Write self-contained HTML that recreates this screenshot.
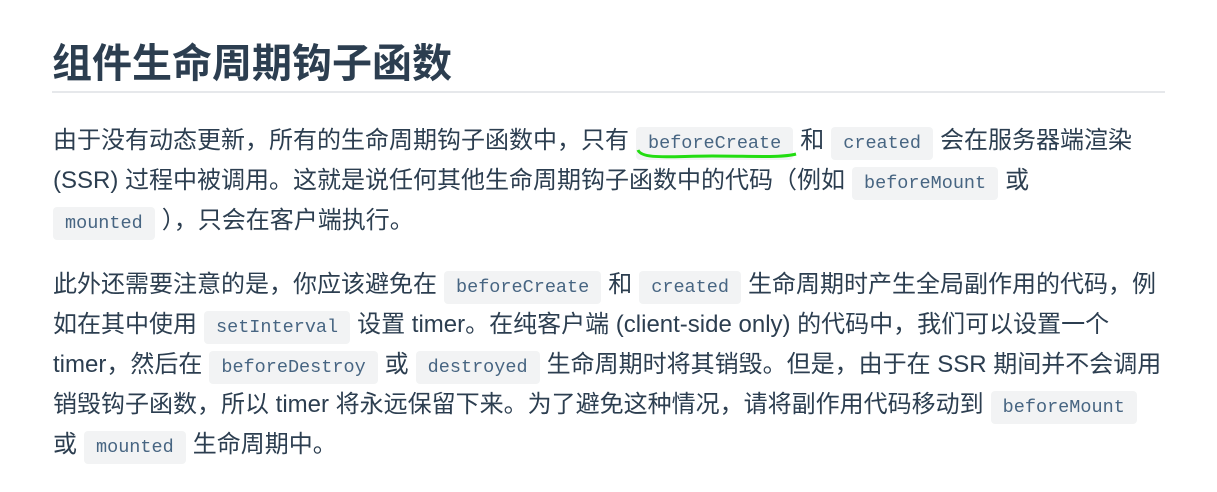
<!DOCTYPE html>
<html><head><meta charset="utf-8"><style>
body{margin:0;width:1217px;height:492px;background:#fff;overflow:hidden;position:relative;font-family:"Liberation Sans","Noto Sans CJK SC",sans-serif;color:#2c3e50}
h1{position:absolute;left:52px;top:38px;margin:0;font-size:40px;font-weight:bold;line-height:52px;color:#2c3e50}
.hr{position:absolute;left:52px;top:91px;width:1113px;height:2px;background:#e6e8eb}
.l{position:absolute;left:53px;font-size:24px;line-height:40px;white-space:nowrap}
code{font-family:"Liberation Mono",monospace;font-size:18.5px;color:#476582;background:#f2f3f4;border-radius:4px;padding:6px 12px;margin:0 7px}
</style></head><body>
<h1>组件生命周期钩子函数</h1>
<div class="hr"></div>
<div class="l" style="top:121px">由于没有动态更新，所有的生命周期钩子函数中，只有<code>beforeCreate</code>和<code>created</code>会在服务器端渲染</div>
<svg style="position:absolute;left:632px;top:146px" width="170" height="18"><path d="M6 4 C10 14 40 10 80 10 S150 12 164 8" stroke="#22dd11" stroke-width="3" fill="none"/></svg>
<div class="l" style="top:161px">(SSR) 过程中被调用。这就是说任何其他生命周期钩子函数中的代码（例如<code>beforeMount</code>或</div>
<div class="l" style="top:201px"><code style="margin-left:0">mounted</code>），只会在客户端执行。</div>
<div class="l" style="top:265px">此外还需要注意的是，你应该避免在<code>beforeCreate</code>和<code>created</code>生命周期时产生全局副作用的代码，例</div>
<div class="l" style="top:305px">如在其中使用<code>setInterval</code>设置 timer。在纯客户端 (client-side only) 的代码中，我们可以设置一个</div>
<div class="l" style="top:345px">timer，然后在<code>beforeDestroy</code>或<code>destroyed</code>生命周期时将其销毁。但是，由于在 SSR 期间并不会调用</div>
<div class="l" style="top:385px">销毁钩子函数，所以 timer 将永远保留下来。为了避免这种情况，请将副作用代码移动到<code>beforeMount</code></div>
<div class="l" style="top:425px">或<code>mounted</code>生命周期中。</div>
</body></html>
